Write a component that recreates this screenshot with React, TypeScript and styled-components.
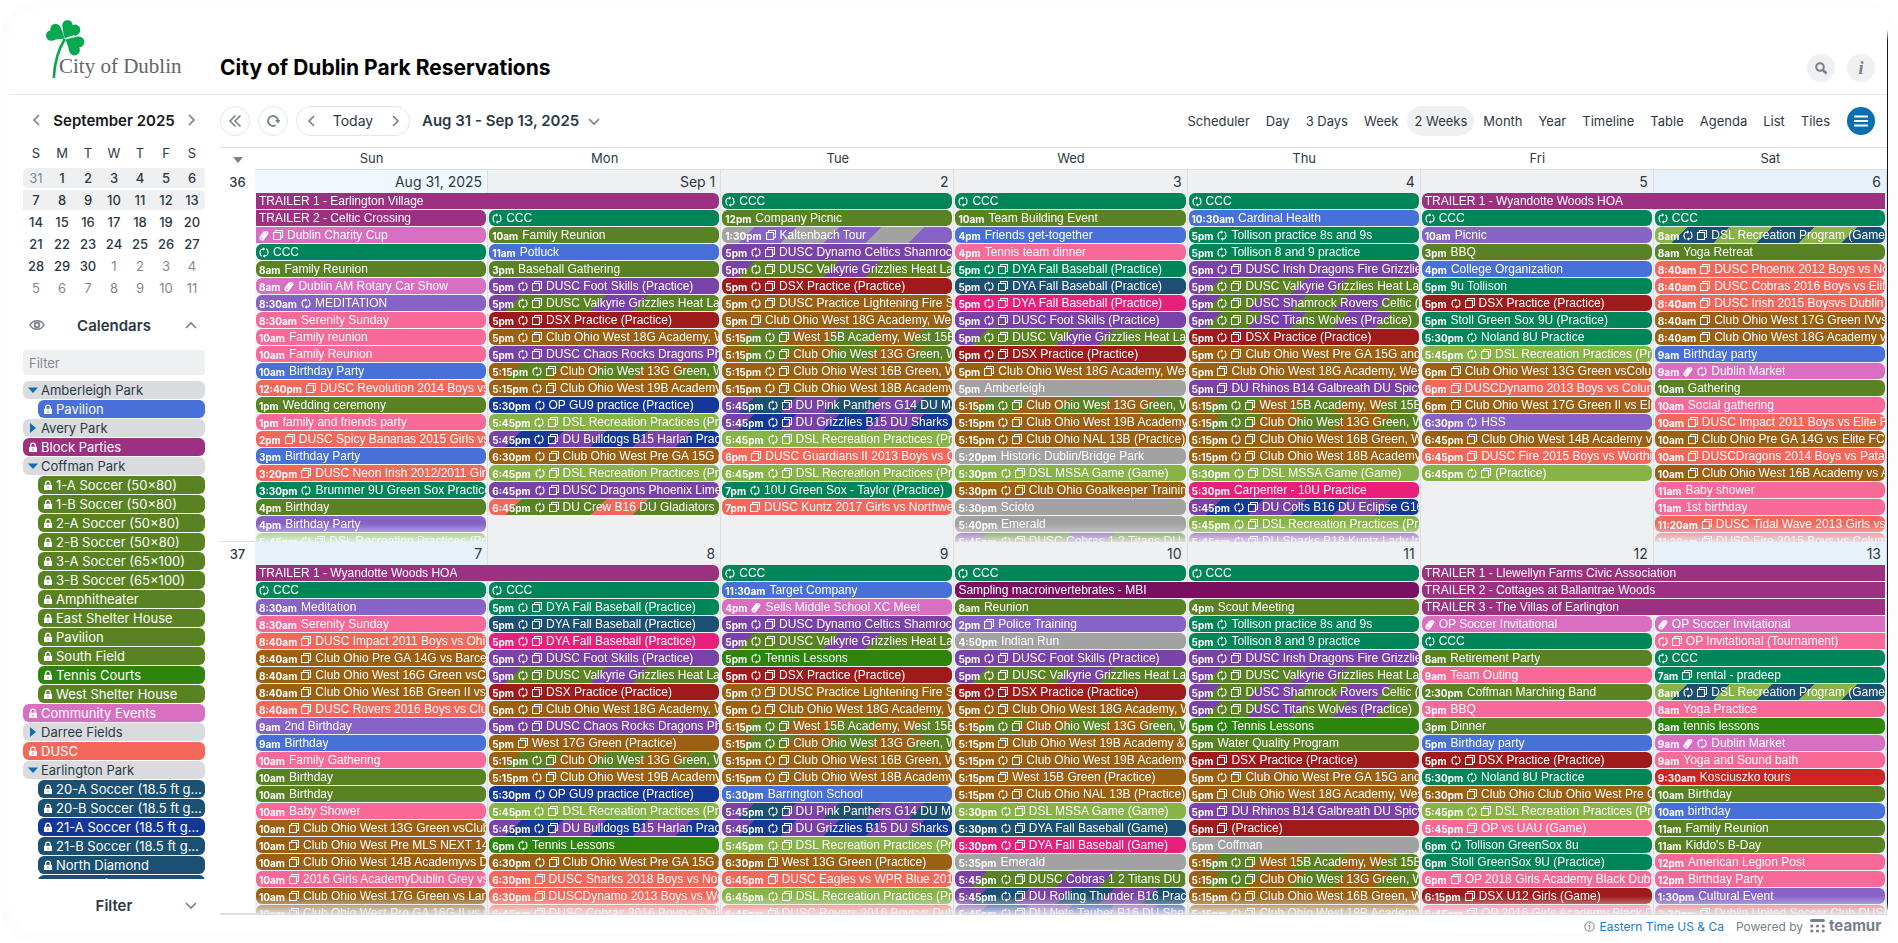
import React from "react";
import styled, { createGlobalStyle, css } from "styled-components";

/* ---------- palette ---------- */

const C = {
  trailer: "#9c3181",
  plum: "#780f60",
  orchid: "#d96fc0",
  teal: "#008558",
  olive: "#598322",
  violet: "#8863c7",
  pink: "#f76a98",
  blue: "#4770d8",
  coral: "#f4685c",
  brown: "#9b6012",
  purple: "#7a42a8",
  maroon: "#9f1a1a",
  navy: "#133897",
  lime: "#88b347",
  grey: "#a2a2a2",
  steel: "#1c5072",
  magenta: "#e81f7b",
  tennis: "#2d850e",
  red: "#cf2424",
};

type ColorName = keyof typeof C;

const STRIPE = 30;

/* One colour gives a flat bar; several give diagonal bands of equal width. */
const paint = (names: string) => {
  const list = names.split("/").map((n) => C[n as ColorName]);
  if (list.length === 1) return list[0];
  const stops = list.map(
    (c, i) => `${c} ${i * STRIPE - 7}px ${(i + 1) * STRIPE - 7}px`
  );
  return `repeating-linear-gradient(135deg, ${stops.join(", ")})`;
};

/* ---------- event data: "colour|time|icons|title" ---------- */

type Entry = string | null;
interface Span {
  row: number;
  col: number;
  span: number;
  color: ColorName;
  title: string;
  open: "left" | "right" | "none";
}
interface WeekData {
  no: number;
  days: { label: string; tone: "soft" | "weekend" | "week" }[];
  spans: Span[];
  events: Entry[][];
}

const ccc = "teal||r|CCC";
const valkyrie = "purple/olive/olive|5pm|rc|DUSC Valkyrie Grizzlies Heat Lac";
const dsx = "maroon|5pm|rc|DSX Practice (Practice)";
const foot = "purple|5pm|rc|DUSC Foot Skills (Practice)";
const west13 = "brown/olive|5:15pm|rc|Club Ohio West 13G Green, We";
const west15 = "brown/olive|5:15pm|rc|West 15B Academy, West 15B G";
const dsl545 = "lime|5:45pm|rc|DSL Recreation Practices (Prac";
const dsl645 = "lime|6:45pm|rc|DSL Recreation Practices (Prac";
const dyaTeal = "teal|5pm|rc|DYA Fall Baseball (Practice)";
const dyaSteel = "steel|5pm|rc|DYA Fall Baseball (Practice)";
const dyaMagenta = "magenta|5pm|rc|DYA Fall Baseball (Practice)";

const weeks: WeekData[] = [
  {
    no: 36,
    days: [
      { label: "Aug 31, 2025", tone: "soft" },
      { label: "Sep 1", tone: "week" },
      { label: "2", tone: "week" },
      { label: "3", tone: "week" },
      { label: "4", tone: "week" },
      { label: "5", tone: "week" },
      { label: "6", tone: "weekend" },
    ],
    spans: [
      { row: 0, col: 0, span: 2, color: "trailer", title: "TRAILER 1 - Earlington Village", open: "left" },
      { row: 1, col: 0, span: 1, color: "trailer", title: "TRAILER 2 - Celtic Crossing", open: "left" },
      { row: 0, col: 5, span: 2, color: "trailer", title: "TRAILER 1 - Wyandotte Woods HOA", open: "right" },
    ],
    events: [
      [
        null,
        null,
        "orchid||pc|Dublin Charity Cup|left",
        ccc,
        "olive|8am||Family Reunion",
        "orchid|8am|p|Dublin AM Rotary Car Show",
        "violet|8:30am|r|MEDITATION",
        "pink|8:30am||Serenity Sunday",
        "pink|10am||Family reunion",
        "pink|10am||Family Reunion",
        "blue|10am||Birthday Party",
        "coral|12:40pm|c|DUSC Revolution 2014 Boys vs",
        "olive|1pm||Wedding ceremony",
        "pink|1pm||family and friends party",
        "coral|2pm|c|DUSC Spicy Bananas 2015 Girls vs",
        "blue|3pm||Birthday Party",
        "coral|3:20pm|c|DUSC Neon Irish 2012/2011 Girls",
        "teal|3:30pm|r|Brummer 9U Green Sox Practice",
        "olive|4pm||Birthday",
        "violet|4pm||Birthday Party",
        dsl545,
      ],
      [
        null,
        ccc,
        "olive|10am||Family Reunion",
        "blue|11am||Potluck",
        "olive|3pm||Baseball Gathering",
        foot,
        valkyrie,
        dsx,
        "brown|5pm|rc|Club Ohio West 18G Academy, We",
        "purple|5pm|rc|DUSC Chaos Rocks Dragons Pho",
        west13,
        "brown|5:15pm|rc|Club Ohio West 19B Academy",
        "navy|5:30pm|r|OP GU9 practice (Practice)",
        dsl545,
        "purple/navy|5:45pm|rc|DU Bulldogs B15 Harlan Practic",
        "brown|6:30pm|rc|Club Ohio West Pre GA 15G (Pr",
        dsl645,
        "purple|6:45pm|rc|DUSC Dragons Phoenix Limeri",
        "coral/olive/olive|6:45pm|rc|DU Crew B16 DU Gladiators B1",
      ],
      [
        ccc,
        "olive|12pm||Company Picnic",
        "grey/violet|1:30pm|c|Kaltenbach Tour",
        "purple|5pm|rc|DUSC Dynamo Celtics Shamrock",
        valkyrie,
        dsx,
        "brown|5pm|rc|DUSC Practice Lightening Fire S",
        "brown|5pm|c|Club Ohio West 18G Academy, West",
        west15,
        west13,
        "brown|5:15pm|rc|Club Ohio West 16B Green, We",
        "brown|5:15pm|rc|Club Ohio West 18B Academy, ",
        "purple/steel|5:45pm|rc|DU Pink Panthers G14 DU Mat",
        "purple/navy|5:45pm|rc|DU Grizzlies B15 DU Sharks B1",
        dsl545,
        "coral|6pm|c|DUSC Guardians II 2013 Boys vs Cl",
        dsl645,
        "teal|7pm|r|10U Green Sox - Taylor (Practice)",
        "coral|7pm|c|DUSC Kuntz 2017 Girls vs Northwes",
      ],
      [
        ccc,
        "olive|10am||Team Building Event",
        "blue|4pm||Friends get-together",
        "pink|4pm||Tennis team dinner",
        dyaTeal,
        dyaSteel,
        dyaMagenta,
        foot,
        valkyrie,
        dsx,
        "brown|5pm|c|Club Ohio West 18G Academy, West",
        "grey|5pm||Amberleigh",
        west13,
        "brown|5:15pm|rc|Club Ohio West 19B Academy",
        "brown|5:15pm|rc|Club Ohio NAL 13B (Practice)",
        "grey|5:20pm||Historic Dublin/Bridge Park",
        "lime|5:30pm|rc|DSL MSSA Game (Game)",
        "brown|5:30pm|rc|Club Ohio Goalkeeper Training",
        "grey|5:30pm||Scioto",
        "grey|5:40pm||Emerald",
        "purple/olive/olive|5:45pm|rc|DUSC Cobras 1 2 Titans DU Lig",
      ],
      [
        ccc,
        "blue|10:30am||Cardinal Health",
        "teal|5pm|r|Tollison practice 8s and 9s",
        "teal|5pm|r|Tollison 8 and 9 practice",
        "purple|5pm|rc|DUSC Irish Dragons Fire Grizzlies",
        valkyrie,
        "purple/olive|5pm|rc|DUSC Shamrock Rovers Celtic (P",
        "purple/olive|5pm|rc|DUSC Titans Wolves (Practice)",
        dsx,
        "brown|5pm|rc|Club Ohio West Pre GA 15G and ",
        "brown|5pm|c|Club Ohio West 18G Academy, West",
        "purple|5pm|c|DU Rhinos B14 Galbreath DU Spicy",
        west15,
        west13,
        "brown|5:15pm|rc|Club Ohio West 16B Green, We",
        "brown|5:15pm|rc|Club Ohio West 18B Academy, ",
        "lime|5:30pm|rc|DSL MSSA Game (Game)",
        "magenta|5:30pm||Carpenter - 10U Practice",
        "purple/navy|5:45pm|rc|DU Colts B16 DU Eclipse G16 ",
        dsl545,
        "purple|5:45pm|rc|DU Sharks B18 Kuntz Lady Irish",
      ],
      [
        null,
        ccc,
        "violet|10am||Picnic",
        "olive|3pm||BBQ",
        "blue|4pm||College Organization",
        "teal|5pm||9u Tollison",
        dsx,
        "teal|5pm||Stoll Green Sox 9U (Practice)",
        "teal|5:30pm|r|Noland 8U Practice",
        dsl545,
        "brown|6pm|c|Club Ohio West 13G Green vsColum",
        "coral|6pm|c|DUSCDynamo 2013 Boys vs Colum",
        "brown|6pm|c|Club Ohio West 17G Green II vs Elite",
        "violet|6:30pm|r|HSS",
        "brown|6:45pm|c|Club Ohio West 14B Academy vs ",
        "coral|6:45pm|c|DUSC Fire 2015 Boys vs Worthing",
        "lime|6:45pm|rc|(Practice)",
      ],
      [
        null,
        ccc,
        "lime/steel|8am|rc|DSL Recreation Program (Game)",
        "olive|8am||Yoga Retreat",
        "coral|8:40am|c|DUSC Phoenix 2012 Boys vs Nort",
        "coral|8:40am|c|DUSC Cobras 2016 Boys vs Elite ",
        "coral|8:40am|c|DUSC Irish 2015 Boysvs Dublin Un",
        "brown|8:40am|c|Club Ohio West 17G Green IVvs ",
        "brown|8:40am|c|Club Ohio West 18G Academy vs ",
        "blue|9am||Birthday party",
        "orchid|9am|pr|Dublin Market",
        "olive|10am||Gathering",
        "pink|10am||Social gathering",
        "coral|10am|c|DUSC Impact 2011 Boys vs Elite FC",
        "brown|10am|c|Club Ohio Pre GA 14G vs Elite FC",
        "coral|10am|c|DUSCDragons 2014 Boys vs Patask",
        "brown|10am|c|Club Ohio West 16B Academy vs A",
        "pink|11am||Baby shower",
        "pink|11am||1st birthday",
        "coral|11:20am|c|DUSC Tidal Wave 2013 Girls vs",
        "coral|11:20am|c|DUSC Fire 2015 Boys vs Columb",
      ],
    ],
  },
  {
    no: 37,
    days: [
      { label: "7", tone: "weekend" },
      { label: "8", tone: "week" },
      { label: "9", tone: "week" },
      { label: "10", tone: "week" },
      { label: "11", tone: "week" },
      { label: "12", tone: "week" },
      { label: "13", tone: "weekend" },
    ],
    spans: [
      { row: 0, col: 0, span: 2, color: "trailer", title: "TRAILER 1 - Wyandotte Woods HOA", open: "left" },
      { row: 1, col: 3, span: 2, color: "plum", title: "Sampling macroinvertebrates - MBI", open: "none" },
      { row: 0, col: 5, span: 2, color: "trailer", title: "TRAILER 1 - Llewellyn Farms Civic Association", open: "right" },
      { row: 1, col: 5, span: 2, color: "trailer", title: "TRAILER 2 - Cottages at Ballantrae Woods", open: "right" },
      { row: 2, col: 5, span: 2, color: "trailer", title: "TRAILER 3 - The Villas of Earlington", open: "right" },
    ],
    events: [
      [
        null,
        ccc,
        "violet|8:30am||Meditation",
        "pink|8:30am||Serenity Sunday",
        "coral|8:40am|c|DUSC Impact 2011 Boys vs Ohio",
        "brown|8:40am|c|Club Ohio Pre GA 14G vs Barcelo",
        "brown|8:40am|c|Club Ohio West 16G Green vsClub",
        "brown|8:40am|c|Club Ohio West 16B Green II vs B",
        "coral|8:40am|c|DUSC Rovers 2016 Boys vs Club ",
        "violet|9am||2nd Birthday",
        "blue|9am||Birthday",
        "pink|10am||Family Gathering",
        "olive|10am||Birthday",
        "olive|10am||Birthday",
        "pink|10am||Baby Shower",
        "brown|10am|c|Club Ohio West 13G Green vsClub",
        "brown|10am|c|Club Ohio West Pre MLS NEXT 14",
        "brown|10am|c|Club Ohio West 14B Academyvs Du",
        "pink|10am|c|2016 Girls AcademyDublin Grey vs",
        "brown|10am|c|Club Ohio West 17G Green vs Lanc",
        "brown|10am|c|Club Ohio West Pre GA 16G II vs C",
      ],
      [
        null,
        ccc,
        dyaTeal,
        dyaSteel,
        dyaMagenta,
        foot,
        valkyrie,
        dsx,
        "brown|5pm|rc|Club Ohio West 18G Academy, We",
        "purple|5pm|rc|DUSC Chaos Rocks Dragons Pho",
        "brown|5pm|c|West 17G Green (Practice)",
        west13,
        "brown|5:15pm|rc|Club Ohio West 19B Academy",
        "navy|5:30pm|r|OP GU9 practice (Practice)",
        dsl545,
        "purple/navy|5:45pm|rc|DU Bulldogs B15 Harlan Practic",
        "tennis|6pm|r|Tennis Lessons",
        "brown|6:30pm|rc|Club Ohio West Pre GA 15G (Pr",
        "coral|6:30pm|c|DUSC Sharks 2018 Boys vs North",
        "coral|6:30pm|c|DUSCDynamo 2013 Boys vs Wor",
        "coral|6:45pm|c|DUSC Cobras 2016 Boysvs Dubli",
      ],
      [
        ccc,
        "blue|11:30am||Target Company",
        "orchid|4pm|p|Sells Middle School XC Meet",
        "purple|5pm|rc|DUSC Dynamo Celtics Shamrock",
        valkyrie,
        "tennis|5pm|r|Tennis Lessons",
        dsx,
        "brown|5pm|rc|DUSC Practice Lightening Fire S",
        "brown|5pm|rc|Club Ohio West 18G Academy, We",
        west15,
        west13,
        "brown|5:15pm|rc|Club Ohio West 16B Green, We",
        "brown|5:15pm|rc|Club Ohio West 18B Academy, ",
        "blue|5:30pm||Barrington School",
        "purple/steel|5:45pm|rc|DU Pink Panthers G14 DU Mat",
        "purple/navy|5:45pm|rc|DU Grizzlies B15 DU Sharks B1",
        dsl545,
        "brown|6:30pm|c|West 13G Green (Practice)",
        "coral|6:45pm|c|DUSC Eagles vs WPR Blue 2015",
        dsl645,
        "coral|6:45pm|c|DUSC Rovers 2016 Boysvs Dubli",
      ],
      [
        ccc,
        null,
        "olive|8am||Reunion",
        "violet|2pm|c|Police Training",
        "grey|4:50pm||Indian Run",
        foot,
        valkyrie,
        dsx,
        "brown|5pm|rc|Club Ohio West 18G Academy, We",
        west13,
        "brown|5:15pm|c|Club Ohio West 19B Academy & 1",
        "brown|5:15pm|rc|Club Ohio West 19B Academy",
        "brown|5:15pm|c|West 15B Green (Practice)",
        "brown|5:15pm|rc|Club Ohio NAL 13B (Practice)",
        "lime|5:30pm|rc|DSL MSSA Game (Game)",
        "steel|5:30pm|rc|DYA Fall Baseball (Game)",
        "magenta|5:30pm|rc|DYA Fall Baseball (Game)",
        "grey|5:35pm||Emerald",
        "purple/olive/olive|5:45pm|rc|DUSC Cobras 1 2 Titans DU Lig",
        "purple/steel|5:45pm|rc|DU Rolling Thunder B16 Practic",
        "purple/navy|5:45pm|rc|DU Nets Tauber B16 DU Shelby",
      ],
      [
        ccc,
        null,
        "olive|4pm||Scout Meeting",
        "teal|5pm|r|Tollison practice 8s and 9s",
        "teal|5pm|r|Tollison 8 and 9 practice",
        "purple|5pm|rc|DUSC Irish Dragons Fire Grizzlies",
        valkyrie,
        "purple/olive|5pm|rc|DUSC Shamrock Rovers Celtic (P",
        "purple/olive|5pm|rc|DUSC Titans Wolves (Practice)",
        "tennis|5pm|r|Tennis Lessons",
        "olive|5pm||Water Quality Program",
        "maroon|5pm|c|DSX Practice (Practice)",
        "brown|5pm|rc|Club Ohio West Pre GA 15G and ",
        "brown|5pm|c|Club Ohio West 18G Academy, West",
        "purple|5pm|c|DU Rhinos B14 Galbreath DU Spicy",
        "maroon|5pm|c|(Practice)",
        "grey|5pm||Coffman",
        west15,
        west13,
        "brown|5:15pm|rc|Club Ohio West 16B Green, We",
        "brown|5:15pm|rc|Club Ohio West 18B Academy",
      ],
      [
        null,
        null,
        null,
        "orchid||p|OP Soccer Invitational",
        ccc,
        "olive|8am||Retirement Party",
        "pink|9am||Team Outing",
        "olive|2:30pm||Coffman Marching Band",
        "pink|3pm||BBQ",
        "olive|3pm||Dinner",
        "blue|5pm||Birthday party",
        dsx,
        "teal|5:30pm|r|Noland 8U Practice",
        "brown|5:30pm|c|Club Ohio Club Ohio West Pre GA",
        dsl545,
        "pink|5:45pm|c|OP vs UAU (Game)",
        "teal|6pm|r|Tollison GreenSox 8u",
        "teal|6pm||Stoll GreenSox 9U (Practice)",
        "pink|6pm|c|OP 2018 Girls Academy Black Dublin",
        "maroon|6:15pm|c|DSX U12 Girls (Game)",
        "pink|6:45pm|c|OP 2016 Girls Academy Black Du",
      ],
      [
        null,
        null,
        null,
        "orchid||p|OP Soccer Invitational|right",
        "pink||rc|OP Invitational (Tournament)|right",
        ccc,
        "teal|7am|c|rental - pradeep",
        "lime/steel|8am|rc|DSL Recreation Program (Game)",
        "pink|8am||Yoga Practice",
        "tennis|8am||tennis lessons",
        "orchid|9am|pr|Dublin Market",
        "pink|9am||Yoga and Sound bath",
        "red|9:30am||Kosciuszko tours",
        "olive|10am||Birthday",
        "blue|10am||birthday",
        "olive|11am||Family Reunion",
        "olive|11am||Kiddo's B-Day",
        "pink|12pm||American Legion Post",
        "pink|12pm||Birthday Party",
        "violet|1:30pm||Cultural Event",
        "coral|2:30pm|c|Dublin United Soccer Club DUSC",
      ],
    ],
  },
];

type TreeKind = "open" | "closed" | "top" | "child";
const calendars: [TreeKind, string, ColorName?][] = [
  ["open", "Amberleigh Park"],
  ["child", "Pavilion", "blue"],
  ["closed", "Avery Park"],
  ["top", "Block Parties", "trailer"],
  ["open", "Coffman Park"],
  ["child", "1-A Soccer (50×80)", "olive"],
  ["child", "1-B Soccer (50×80)", "olive"],
  ["child", "2-A Soccer (50×80)", "olive"],
  ["child", "2-B Soccer (50×80)", "olive"],
  ["child", "3-A Soccer (65×100)", "olive"],
  ["child", "3-B Soccer (65×100)", "olive"],
  ["child", "Amphitheater", "olive"],
  ["child", "East Shelter House", "olive"],
  ["child", "Pavilion", "olive"],
  ["child", "South Field", "olive"],
  ["child", "Tennis Courts", "tennis"],
  ["child", "West Shelter House", "olive"],
  ["top", "Community Events", "orchid"],
  ["closed", "Darree Fields"],
  ["top", "DUSC", "coral"],
  ["open", "Earlington Park"],
  ["child", "20-A Soccer (18.5 ft g...", "steel"],
  ["child", "20-B Soccer (18.5 ft g...", "steel"],
  ["child", "21-A Soccer (18.5 ft g...", "navy"],
  ["child", "21-B Soccer (18.5 ft g...", "steel"],
  ["child", "North Diamond", "steel"],
  ["child", "South Diamond", "steel"],
];

const views = [
  "Scheduler", "Day", "3 Days", "Week", "2 Weeks", "Month",
  "Year", "Timeline", "Table", "Agenda", "List", "Tiles",
];
const weekdays = ["Sun", "Mon", "Tue", "Wed", "Thu", "Fri", "Sat"];
const miniRows = [
  [31, 1, 2, 3, 4, 5, 6],
  [7, 8, 9, 10, 11, 12, 13],
  [14, 15, 16, 17, 18, 19, 20],
  [21, 22, 23, 24, 25, 26, 27],
  [28, 29, 30, 1, 2, 3, 4],
  [5, 6, 7, 8, 9, 10, 11],
];

/* ---------- styles ---------- */

const Global = createGlobalStyle`
  * { box-sizing: border-box; }
  body { margin: 0; background: #fff; color: #2b3945; font-family: Inter, "Liberation Sans", sans-serif; }
  button { font: inherit; color: inherit; border: 0; background: none; padding: 0; margin: 0; cursor: pointer; }
  svg { display: block; flex: none; }
`;

const Frame = styled.div`
  height: 100vh;
  padding: 9px 10px 10px 9px;
  background: #fdfdfd;
  border-radius: 36px;
`;

const Shell = styled.div`
  height: 100%;
  display: flex;
  flex-direction: column;
  border-radius: 30px 0 30px 30px;
  background:
    linear-gradient(to bottom, rgba(21, 24, 27, 0), #15181b 12px) right 20px / 1px calc(100% - 38px) no-repeat,
    #fff;
`;

const Header = styled.header`
  flex: none;
  height: 86px;
  margin-right: 1px;
  display: flex;
  border-bottom: 1px solid #e6e7f0;
`;

const LogoBox = styled.div`
  width: 211px;
  padding: 11px 0 0 37px;
`;

const LogoRow = styled.div`
  display: flex;
  align-items: flex-end;
`;

const LogoText = styled.span`
  margin: 0 0 1px -26px;
  font: 21px/26px "Liberation Serif", serif;
  color: #5f666d;
  white-space: nowrap;
`;

const Title = styled.h1`
  flex: 1;
  margin: 0;
  padding-top: 44px;
  font-size: 21px;
  line-height: 30px;
  font-weight: 700;
  color: #000;
`;

const HeaderTools = styled.div`
  display: flex;
  gap: 12px;
  padding: 45px 12px 0 0;
`;

const RoundButton = styled.button<{ $look: "grey" | "blue" | "line" }>`
  flex: none;
  width: ${(p) => (p.$look === "line" ? 30 : 28)}px;
  height: ${(p) => (p.$look === "line" ? 30 : 28)}px;
  display: flex;
  align-items: center;
  justify-content: center;
  border-radius: 50%;
  color: #76808a;
  ${(p) => p.$look === "grey" && css`background: #eff0f2;`}
  ${(p) => p.$look === "blue" && css`background: #0b6eb0; color: #fff; margin-left: 2px;`}
  ${(p) => p.$look === "line" && css`border: 1px solid #e4e5ef;`}
`;

const InfoGlyph = styled.span`
  font: italic bold 18px/20px "Liberation Serif", serif;
`;

const Body = styled.div`
  flex: 1;
  min-height: 0;
  display: flex;
`;

const Sidebar = styled.aside`
  width: 211px;
  padding: 0 15px 2px 14px;
  display: flex;
  flex-direction: column;
`;

const SideHead = styled.div<{ $kind: "month" | "list" | "filter" }>`
  flex: none;
  height: ${(p) => ({ month: 46, list: 50, filter: 52 })[p.$kind]}px;
  padding: ${(p) => (p.$kind === "month" ? 4 : 0)}px 6px 0;
  display: flex;
  align-items: center;
  justify-content: space-between;
  font-size: 15px;
  font-weight: 600;
  color: ${(p) => (p.$kind === "month" ? "#14181c" : "#2b3945")};
  button { color: #76808a; }
`;

const SideSpacer = styled.span`
  width: 16px;
`;

const Mini = styled.table`
  flex: none;
  table-layout: fixed;
  width: 182px;
  border-spacing: 0 2px;
  font-size: 13px;
  line-height: 20px;
  text-align: center;
  th { font-weight: 400; padding: 0 0 3px; }
  td { padding: 0; }
`;

const MiniDay = styled.td<{ $on: boolean; $faint: boolean; $edge: string }>`
  font-weight: 500;
  ${(p) => p.$on && css`background: #eff0f2;`}
  ${(p) => p.$faint && css`color: #808a93; font-weight: 400;`}
  ${(p) => p.$edge === "start" && css`border-radius: 5px 0 0 5px;`}
  ${(p) => p.$edge === "end" && css`border-radius: 0 5px 5px 0;`}
`;

const FilterInput = styled.input`
  flex: none;
  height: 25px;
  margin-bottom: 6px;
  padding: 0 6px;
  border: 0;
  border-radius: 4px;
  background: #eff0f2;
  font: 13px Inter, sans-serif;
  &::placeholder { color: #808a93; opacity: 1; }
`;

const Tree = styled.ul`
  flex: 1;
  min-height: 0;
  overflow: hidden;
  margin: 0;
  padding: 0;
  list-style: none;
  display: flex;
  flex-direction: column;
  gap: 1px;
`;

const TreeButton = styled.button<{ $bg: string; $child: boolean; $group: boolean }>`
  width: ${(p) => (p.$child ? 167 : 182)}px;
  margin-left: ${(p) => (p.$child ? 15 : 0)}px;
  height: 18px;
  padding: 0 0 0 5px;
  display: flex;
  align-items: center;
  gap: 3px;
  border-radius: 6px;
  background: ${(p) => p.$bg};
  color: ${(p) => (p.$group ? "#2b3945" : "#fff")};
  font-size: 13px;
  line-height: 18px;
  text-align: left;
  white-space: nowrap;
`;

const Main = styled.main`
  flex: 1;
  min-width: 0;
  margin-right: 1px;
  display: flex;
  flex-direction: column;
`;

const Toolbar = styled.div`
  flex: none;
  height: 52px;
  padding: 0 12px 1px 0;
  display: flex;
  align-items: center;
  gap: 8px;
  font-size: 14px;
`;

const NavGroup = styled.div`
  display: flex;
  margin-right: 4px;
`;

const NavButton = styled.button<{ $side?: "l" | "r" }>`
  width: ${(p) => (p.$side ? 30 : 54)}px;
  height: 30px;
  display: flex;
  align-items: center;
  justify-content: center;
  border: solid #e4e5ef;
  border-width: 1px 0;
  color: ${(p) => (p.$side ? "#76808a" : "#2b3945")};
  ${(p) => p.$side === "l" && css`border-left-width: 1px; border-radius: 15px 0 0 15px;`}
  ${(p) => p.$side === "r" && css`border-right-width: 1px; border-radius: 0 15px 15px 0;`}
`;

const Range = styled.button`
  flex: none;
  display: flex;
  align-items: center;
  gap: 7px;
  font-size: 15px;
  font-weight: 600;
  svg { color: #76808a; }
`;

const Views = styled.nav`
  margin-left: auto;
  display: flex;
  gap: 2px;
`;

const ViewButton = styled.button<{ $on: boolean }>`
  height: 30px;
  padding: 0 7px;
  border-radius: 15px;
  font-size: 13px;
  white-space: nowrap;
  background: ${(p) => (p.$on ? "#eff0f2" : "transparent")};
`;

const Row = styled.div`
  display: grid;
  grid-template-columns: 35px 1fr;
`;

const WeekdayRow = styled(Row)`
  flex: none;
  height: 23px;
  border-top: 1px solid #dcdedf;
  button { display: flex; justify-content: center; padding-top: 9px; color: #76808a; }
`;

const Seven = styled.div`
  display: grid;
  grid-template-columns: repeat(7, minmax(0, 1fr));
`;

const WeekdayNames = styled(Seven)`
  font-size: 13px;
  line-height: 21px;
  text-align: center;
  border-bottom: 1px solid #dcdedf;
`;

const WeekRow = styled(Row)`
  flex: 1;
  min-height: 0;
  overflow: hidden;
`;

const WeekNo = styled.div`
  padding-top: 2px;
  font-size: 13px;
  line-height: 20px;
  font-weight: 500;
  text-align: center;
  border-bottom: 1px solid #dcdedf;
`;

const Stack = styled.div`
  min-height: 0;
  display: grid;
  grid-template: minmax(0, 1fr) / minmax(0, 1fr);
  > * { grid-area: 1 / 1; }
`;

const tones = { soft: "#f0f8fd", weekend: "#e6f1fa", week: "#eff0f2" };

const Day = styled.div<{ $tone: keyof typeof tones }>`
  display: flex;
  align-items: flex-start;
  justify-content: flex-end;
  padding: 1px 5px 0 0;
  border-right: 1px solid #dcdedf;
  background: ${(p) => tones[p.$tone]};
  font-size: 14px;
  line-height: 22px;
`;

const Events = styled(Seven)`
  min-height: 0;
  overflow: hidden;
  padding-top: 23px;
  grid-auto-rows: 16px;
  row-gap: 1px;
  mask-image: linear-gradient(to bottom, #000 calc(100% - 18px), rgba(0, 0, 0, 0.15));
`;

const radii = { left: "0 6px 6px 0", right: "6px 0 0 6px", none: "6px" };

const EventButton = styled.button<{
  $paint: string; $row: number; $col: number; $span: number; $open: keyof typeof radii;
}>`
  grid-area: ${(p) => p.$row} / ${(p) => p.$col} / auto / span ${(p) => p.$span};
  margin: 0 2px 0 1px;
  padding-left: 3px;
  min-width: 0;
  overflow: hidden;
  display: flex;
  align-items: center;
  gap: 4px;
  border-radius: ${(p) => radii[p.$open]};
  background: ${(p) => p.$paint};
  color: #fff;
  font: 12px/16px "Liberation Sans", Arial, sans-serif;
  white-space: nowrap;
`;

const Time = styled.span`
  flex: none;
  font: 700 10px/14px Inter, sans-serif;
  padding-top: 2px;
`;

const EventTitle = styled.span`
  min-width: 0;
  overflow: hidden;
`;

const Footer = styled.footer`
  flex: none;
  height: 19px;
  padding: 4px 3px 0 0;
  display: flex;
  justify-content: flex-end;
  align-items: center;
  border-top: 1px solid #dcdedf;
  font-size: 12px;
  line-height: 15px;
  color: #76808a;
`;

const Zone = styled.a`
  margin: 0 12px 0 5px;
  color: #1b7ccb;
  text-decoration: none;
`;

const Brand = styled.a`
  width: 74px;
  margin-left: 7px;
  overflow: hidden;
  display: flex;
  align-items: center;
  gap: 4px;
  color: #76808a;
  font-size: 15px;
  line-height: 16px;
  font-weight: 700;
  text-decoration: none;
`;

/* ---------- icons ---------- */

const Chevron = ({ d, w = 16 }: { d: "l" | "r" | "u" | "d"; w?: number }) => {
  const paths = { l: "M10 3 5 8l5 5", r: "M6 3l5 5-5 5", u: "M3 11l5-5 5 5", d: "M3 6l5 5 5-5" };
  return (
    <svg width={w} height={w} viewBox="0 0 16 16" fill="none" stroke="currentColor" strokeWidth="1.6">
      <path d={paths[d]} />
    </svg>
  );
};

const RecurIcon = () => (
  <svg width="10" height="11" viewBox="0 0 20 22" fill="none" stroke="currentColor" strokeWidth="2.300">
    <path d="M5.200 18.600C3 17 2 14.500 2 11c0-4.200 2.200-6.800 6.500-7M14.800 3.400C17 5 18 7.500 18 11c0 4.200-2.200 6.800-6.500 7" />
    <path d="M8 .3v7.400L12.600 4zM12 14.300v7.400L7.400 18z" fill="currentColor" stroke="none" />
  </svg>
);

const CopyIcon = () => (
  <svg width="10" height="10" viewBox="0 0 10 10" fill="none" stroke="currentColor" strokeWidth="1.100">
    <path d="M.5 2.500h7v7h-7zM2.500 2.500v-2h7v7h-2" />
  </svg>
);

const ClipIcon = () => (
  <svg width="10" height="11" viewBox="0 0 20 22" fill="none" stroke="currentColor" strokeWidth="2.600" strokeLinecap="round">
    <path d="M14.500 7 8.500 15c-1.600 2-4-.2-2.600-2L12.500 4.500c2.300-2.800 6.600.4 4.400 3.400L9.500 18c-3.400 4.200-9.600-.4-6.400-4.800L10.500 3.600" />
  </svg>
);

const LockIcon = () => (
  <svg width="10" height="11" viewBox="0 0 10 11">
    <path d="M2.700 5V3.400a2.300 2.300 0 0 1 4.600 0V5" fill="none" stroke="#fff" strokeWidth="1.300" />
    <path d="M1 4.800h8V10H1z" fill="#fff" />
    <path d="M4.400 6.400h1.200v2H4.400z" fill="#445" opacity="0.600" />
  </svg>
);

const Triangle = ({ open }: { open: boolean }) => (
  <svg width="10" height="10" viewBox="0 0 10 10" fill="#0b6eb0">
    <path d={open ? "M0 2.500h10L5 8z" : "M2 0l6 5-6 5z"} />
  </svg>
);

const icons: Record<string, () => React.ReactElement> = {
  r: RecurIcon,
  c: CopyIcon,
  p: ClipIcon,
};

const Shamrock = () => (
  <svg width="39" height="60" viewBox="0 0 39 60">
    <g fill="#05a94e">
      <circle cx="9.500" cy="9" r="5.200" />
      <circle cx="5.200" cy="15.500" r="5.200" />
      <path d="M13.500 6c2 3 4 8 5 13-4-.5-8 .5-12 1.600L5 12z" />
      <circle cx="21.500" cy="5.300" r="5.200" />
      <circle cx="29" cy="10" r="5.400" />
      <path d="M16.500 6.500c.5 4.500 1 8.500 2.400 12 3.500-2 7-3 11.500-3.200L26 5z" />
      <circle cx="33" cy="22" r="5.400" />
      <circle cx="28.500" cy="30" r="5.400" />
      <path d="M32 16.600c-4.500 1-9 1.900-12.800 2.900 2 3.500 3 7 4 11.500L33 27z" />
    </g>
    <path d="M18.800 19C12 30 8.500 42 7.800 58" fill="none" stroke="#05a94e" strokeWidth="2.600" />
  </svg>
);

/* ---------- parts ---------- */

const EventBar = ({ text, row, col }: { text: string; row: number; col: number }) => {
  const [color, time, marks, title, open = "none"] = text.split("|");
  return (
    <EventButton
      type="button"
      $paint={paint(color)}
      $row={row + 1}
      $col={col + 1}
      $span={1}
      $open={open as keyof typeof radii}
    >
      {time && <Time>{time}</Time>}
      {marks.split("").map((m) => {
        const Icon = icons[m];
        return <Icon key={m} />;
      })}
      <EventTitle>{title}</EventTitle>
    </EventButton>
  );
};

const Week = ({ week }: { week: WeekData }) => (
  <WeekRow>
    <WeekNo>{week.no}</WeekNo>
    <Stack>
      <Seven>
        {week.days.map((d) => (
          <Day key={d.label} $tone={d.tone}>
            <span>{d.label}</span>
          </Day>
        ))}
      </Seven>
      <Events>
        {week.spans.map((s) => (
          <EventButton
            type="button"
            key={s.title}
            $paint={C[s.color]}
            $row={s.row + 1}
            $col={s.col + 1}
            $span={s.span}
            $open={s.open}
          >
            <EventTitle>{s.title}</EventTitle>
          </EventButton>
        ))}
        {week.events.map((list, col) =>
          list.map((e, row) => e && <EventBar key={`${col}-${row}`} text={e} row={row} col={col} />)
        )}
      </Events>
    </Stack>
  </WeekRow>
);

const MiniCalendar = () => (
  <Mini>
    <thead>
      <tr>
        {["S", "M", "T", "W", "T", "F", "S"].map((d, i) => (
          <th key={i} scope="col">{d}</th>
        ))}
      </tr>
    </thead>
    <tbody>
      {miniRows.map((r, y) => (
        <tr key={y}>
          {r.map((n, x) => (
            <MiniDay
              key={x}
              $on={y < 2}
              $faint={(y === 0 && x === 0) || (y === 4 && x > 2) || y === 5}
              $edge={y === 0 && x === 0 ? "start" : y === 1 && x === 6 ? "end" : ""}
            >
              {n}
            </MiniDay>
          ))}
        </tr>
      ))}
    </tbody>
  </Mini>
);

export default function App() {
  return (
    <Frame>
      <Global />
      <Shell>
        <Header>
          <LogoBox>
            <LogoRow>
              <Shamrock />
              <LogoText>City of Dublin</LogoText>
            </LogoRow>
          </LogoBox>
          <Title>City of Dublin Park Reservations</Title>
          <HeaderTools>
            <RoundButton type="button" $look="grey" aria-label="Search">
              <svg width="14" height="14" viewBox="0 0 14 14" fill="none" stroke="currentColor" strokeWidth="2">
                <circle cx="6" cy="6" r="3.800" />
                <path d="M8.800 8.800 12.500 12.500" strokeWidth="2.600" />
              </svg>
            </RoundButton>
            <RoundButton type="button" $look="grey" aria-label="Information">
              <InfoGlyph>i</InfoGlyph>
            </RoundButton>
          </HeaderTools>
        </Header>
        <Body>
          <Sidebar>
            <SideHead $kind="month">
              <button type="button" aria-label="Previous month"><Chevron d="l" /></button>
              <span>September 2025</span>
              <button type="button" aria-label="Next month"><Chevron d="r" /></button>
            </SideHead>
            <MiniCalendar />
            <SideHead $kind="list">
              <button type="button" aria-label="Toggle all calendars">
                <svg width="16" height="12" viewBox="0 0 16 12" fill="none" stroke="currentColor">
                  <path d="M1 6C4 .3 12 .3 15 6 12 11.700 4 11.700 1 6z" strokeWidth="1.600" />
                  <circle cx="8" cy="6" r="2.400" strokeWidth="1.800" />
                </svg>
              </button>
              <span>Calendars</span>
              <button type="button" aria-label="Collapse calendars"><Chevron d="u" /></button>
            </SideHead>
            <FilterInput placeholder="Filter" aria-label="Filter calendars" />
            <Tree>
              {calendars.map(([kind, name, color], i) => {
                const group = kind === "open" || kind === "closed";
                return (
                  <li key={i}>
                    <TreeButton
                      type="button"
                      $bg={color ? C[color] : "#d9dbdf"}
                      $child={kind === "child"}
                      $group={group}
                    >
                      {group ? <Triangle open={kind === "open"} /> : <LockIcon />}
                      <span>{name}</span>
                    </TreeButton>
                  </li>
                );
              })}
            </Tree>
            <SideHead $kind="filter">
              <SideSpacer />
              <span>Filter</span>
              <button type="button" aria-label="Expand filter"><Chevron d="d" /></button>
            </SideHead>
          </Sidebar>
          <Main>
            <Toolbar>
              <RoundButton type="button" $look="line" aria-label="Hide sidebar">
                <svg width="14" height="14" viewBox="0 0 14 14" fill="none" stroke="currentColor" strokeWidth="1.600">
                  <path d="M7.500 1.500 2 7l5.500 5.500M12.500 1.500 7 7l5.500 5.500" />
                </svg>
              </RoundButton>
              <RoundButton type="button" $look="line" aria-label="Refresh">
                <svg width="14" height="14" viewBox="0 0 14 14" fill="none" stroke="currentColor" strokeWidth="1.800">
                  <path d="M9.500 11.300A5 5 0 1 1 12 6.500" />
                  <path d="M9 6h5.500L12 9.500z" fill="currentColor" stroke="none" />
                </svg>
              </RoundButton>
              <NavGroup>
                <NavButton type="button" $side="l" aria-label="Previous"><Chevron d="l" /></NavButton>
                <NavButton type="button">Today</NavButton>
                <NavButton type="button" $side="r" aria-label="Next"><Chevron d="r" /></NavButton>
              </NavGroup>
              <Range type="button">
                Aug 31 - Sep 13, 2025
                <Chevron d="d" />
              </Range>
              <Views>
                {views.map((v) => (
                  <ViewButton key={v} type="button" $on={v === "2 Weeks"}>{v}</ViewButton>
                ))}
              </Views>
              <RoundButton type="button" $look="blue" aria-label="Menu">
                <svg width="14" height="12" viewBox="0 0 14 12" stroke="currentColor" strokeWidth="2">
                  <path d="M0 1.500h14M0 6h14M0 10.500h14" />
                </svg>
              </RoundButton>
            </Toolbar>
            <WeekdayRow>
              <button type="button" aria-label="Expand all">
                <svg width="10" height="6" viewBox="0 0 10 6" fill="currentColor"><path d="M0 0h10L5 6z" /></svg>
              </button>
              <WeekdayNames>
                {weekdays.map((d) => <span key={d}>{d}</span>)}
              </WeekdayNames>
            </WeekdayRow>
            {weeks.map((w) => <Week key={w.no} week={w} />)}
            <Footer>
              <svg width="11" height="11" viewBox="0 0 11 11" fill="none" stroke="currentColor">
                <circle cx="5.500" cy="5.500" r="4.700" />
                <path d="M4.500 4.500h1.200v4" />
                <path d="M5 2.600h1" />
              </svg>
              <Zone href="#timezone">Eastern Time US &amp; Ca</Zone>
              <span>Powered by</span>
              <Brand href="#teamup">
                <svg width="15" height="14" viewBox="0 0 15 14" fill="currentColor">
                  <rect width="15" height="3" rx="1.500" />
                  <circle cx="1.800" cy="7" r="1.600" /><circle cx="7.500" cy="7" r="1.600" /><circle cx="13.200" cy="7" r="1.600" />
                  <circle cx="1.800" cy="12" r="1.600" /><circle cx="7.500" cy="12" r="1.600" /><circle cx="13.200" cy="12" r="1.600" />
                </svg>
                teamur
              </Brand>
            </Footer>
          </Main>
        </Body>
      </Shell>
    </Frame>
  );
}
